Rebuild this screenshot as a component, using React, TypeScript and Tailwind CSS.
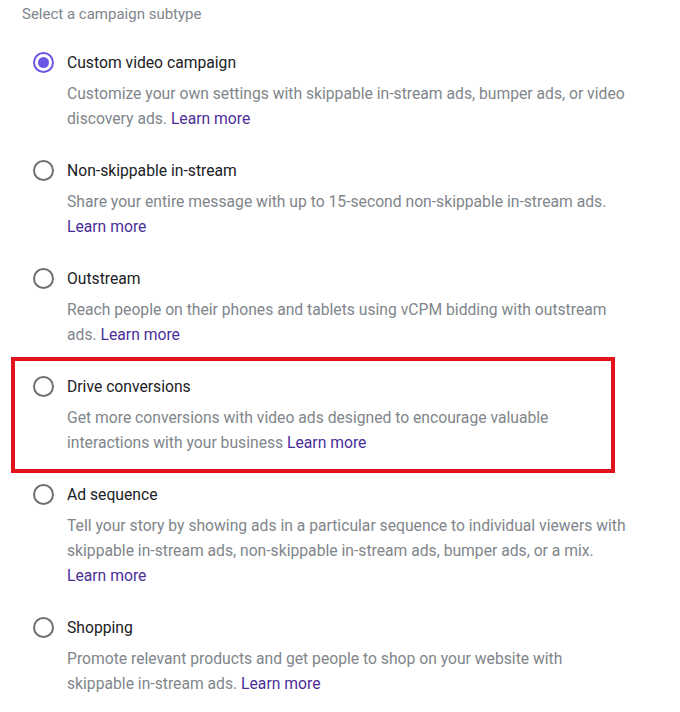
import React from "react";

type Option = {
  title: string;
  desc: string;
  selected?: boolean;
  highlight?: boolean;
};

const OPTIONS: Option[] = [
  {
    title: "Custom video campaign",
    desc: "Customize your own settings with skippable in-stream ads, bumper ads, or video discovery ads.",
    selected: true,
  },
  {
    title: "Non-skippable in-stream",
    desc: "Share your entire message with up to 15-second non-skippable in-stream ads.",
  },
  {
    title: "Outstream",
    desc: "Reach people on their phones and tablets using vCPM bidding with outstream ads.",
  },
  {
    title: "Drive conversions",
    desc: "Get more conversions with video ads designed to encourage valuable interactions with your business",
    highlight: true,
  },
  {
    title: "Ad sequence",
    desc: "Tell your story by showing ads in a particular sequence to individual viewers with skippable in-stream ads, non-skippable in-stream ads, bumper ads, or a mix.",
  },
  {
    title: "Shopping",
    desc: "Promote relevant products and get people to shop on your website with skippable in-stream ads.",
  },
];

function Radio({ checked }: { checked?: boolean }) {
  return checked ? (
    <div className="w-[21px] h-[21px] rounded-full border-2 border-[#6a57e6] flex items-center justify-center">
      <div className="w-[11px] h-[11px] rounded-full bg-[#6a57e6]" />
    </div>
  ) : (
    <div className="w-[21px] h-[21px] rounded-full border-2 border-[#707070]" />
  );
}

function OptionRow({ opt }: { opt: Option }) {
  return (
    <div className="flex">
      <div className="w-[67px] pl-[33px] pt-[1px] shrink-0">
        <Radio checked={opt.selected} />
      </div>
      <div className="w-[566px]">
        <div className="text-[15.7px] leading-[24px] text-[#202124]">{opt.title}</div>
        <p className="mt-[6px] text-[15.7px] leading-[25px] text-[#80868b]">
          {opt.desc} <span className="text-[#4b2e98]">Learn more</span>
        </p>
      </div>
    </div>
  );
}

export default function App() {
  return (
    <div className="w-[680px] h-[712px] bg-white overflow-hidden font-['Roboto',sans-serif]">
      <div className="pl-[22px] pt-[3px] text-[15px] leading-[22px] text-[#80868b]">
        Select a campaign subtype
      </div>
      <div className="mt-[26px] flex flex-col">
        {OPTIONS.map((opt) =>
          opt.highlight ? (
            <div
              key={opt.title}
              className="ml-[11px] w-[604px] border-4 border-[#e3131e] pt-[14px] pb-[14px] -mt-[18px] mb-[10px]"
            >
              <div className="-ml-[15px]">
                <OptionRow opt={opt} />
              </div>
            </div>
          ) : (
            <div key={opt.title} className="pb-[28px]">
              <OptionRow opt={opt} />
            </div>
          )
        )}
      </div>
    </div>
  );
}
